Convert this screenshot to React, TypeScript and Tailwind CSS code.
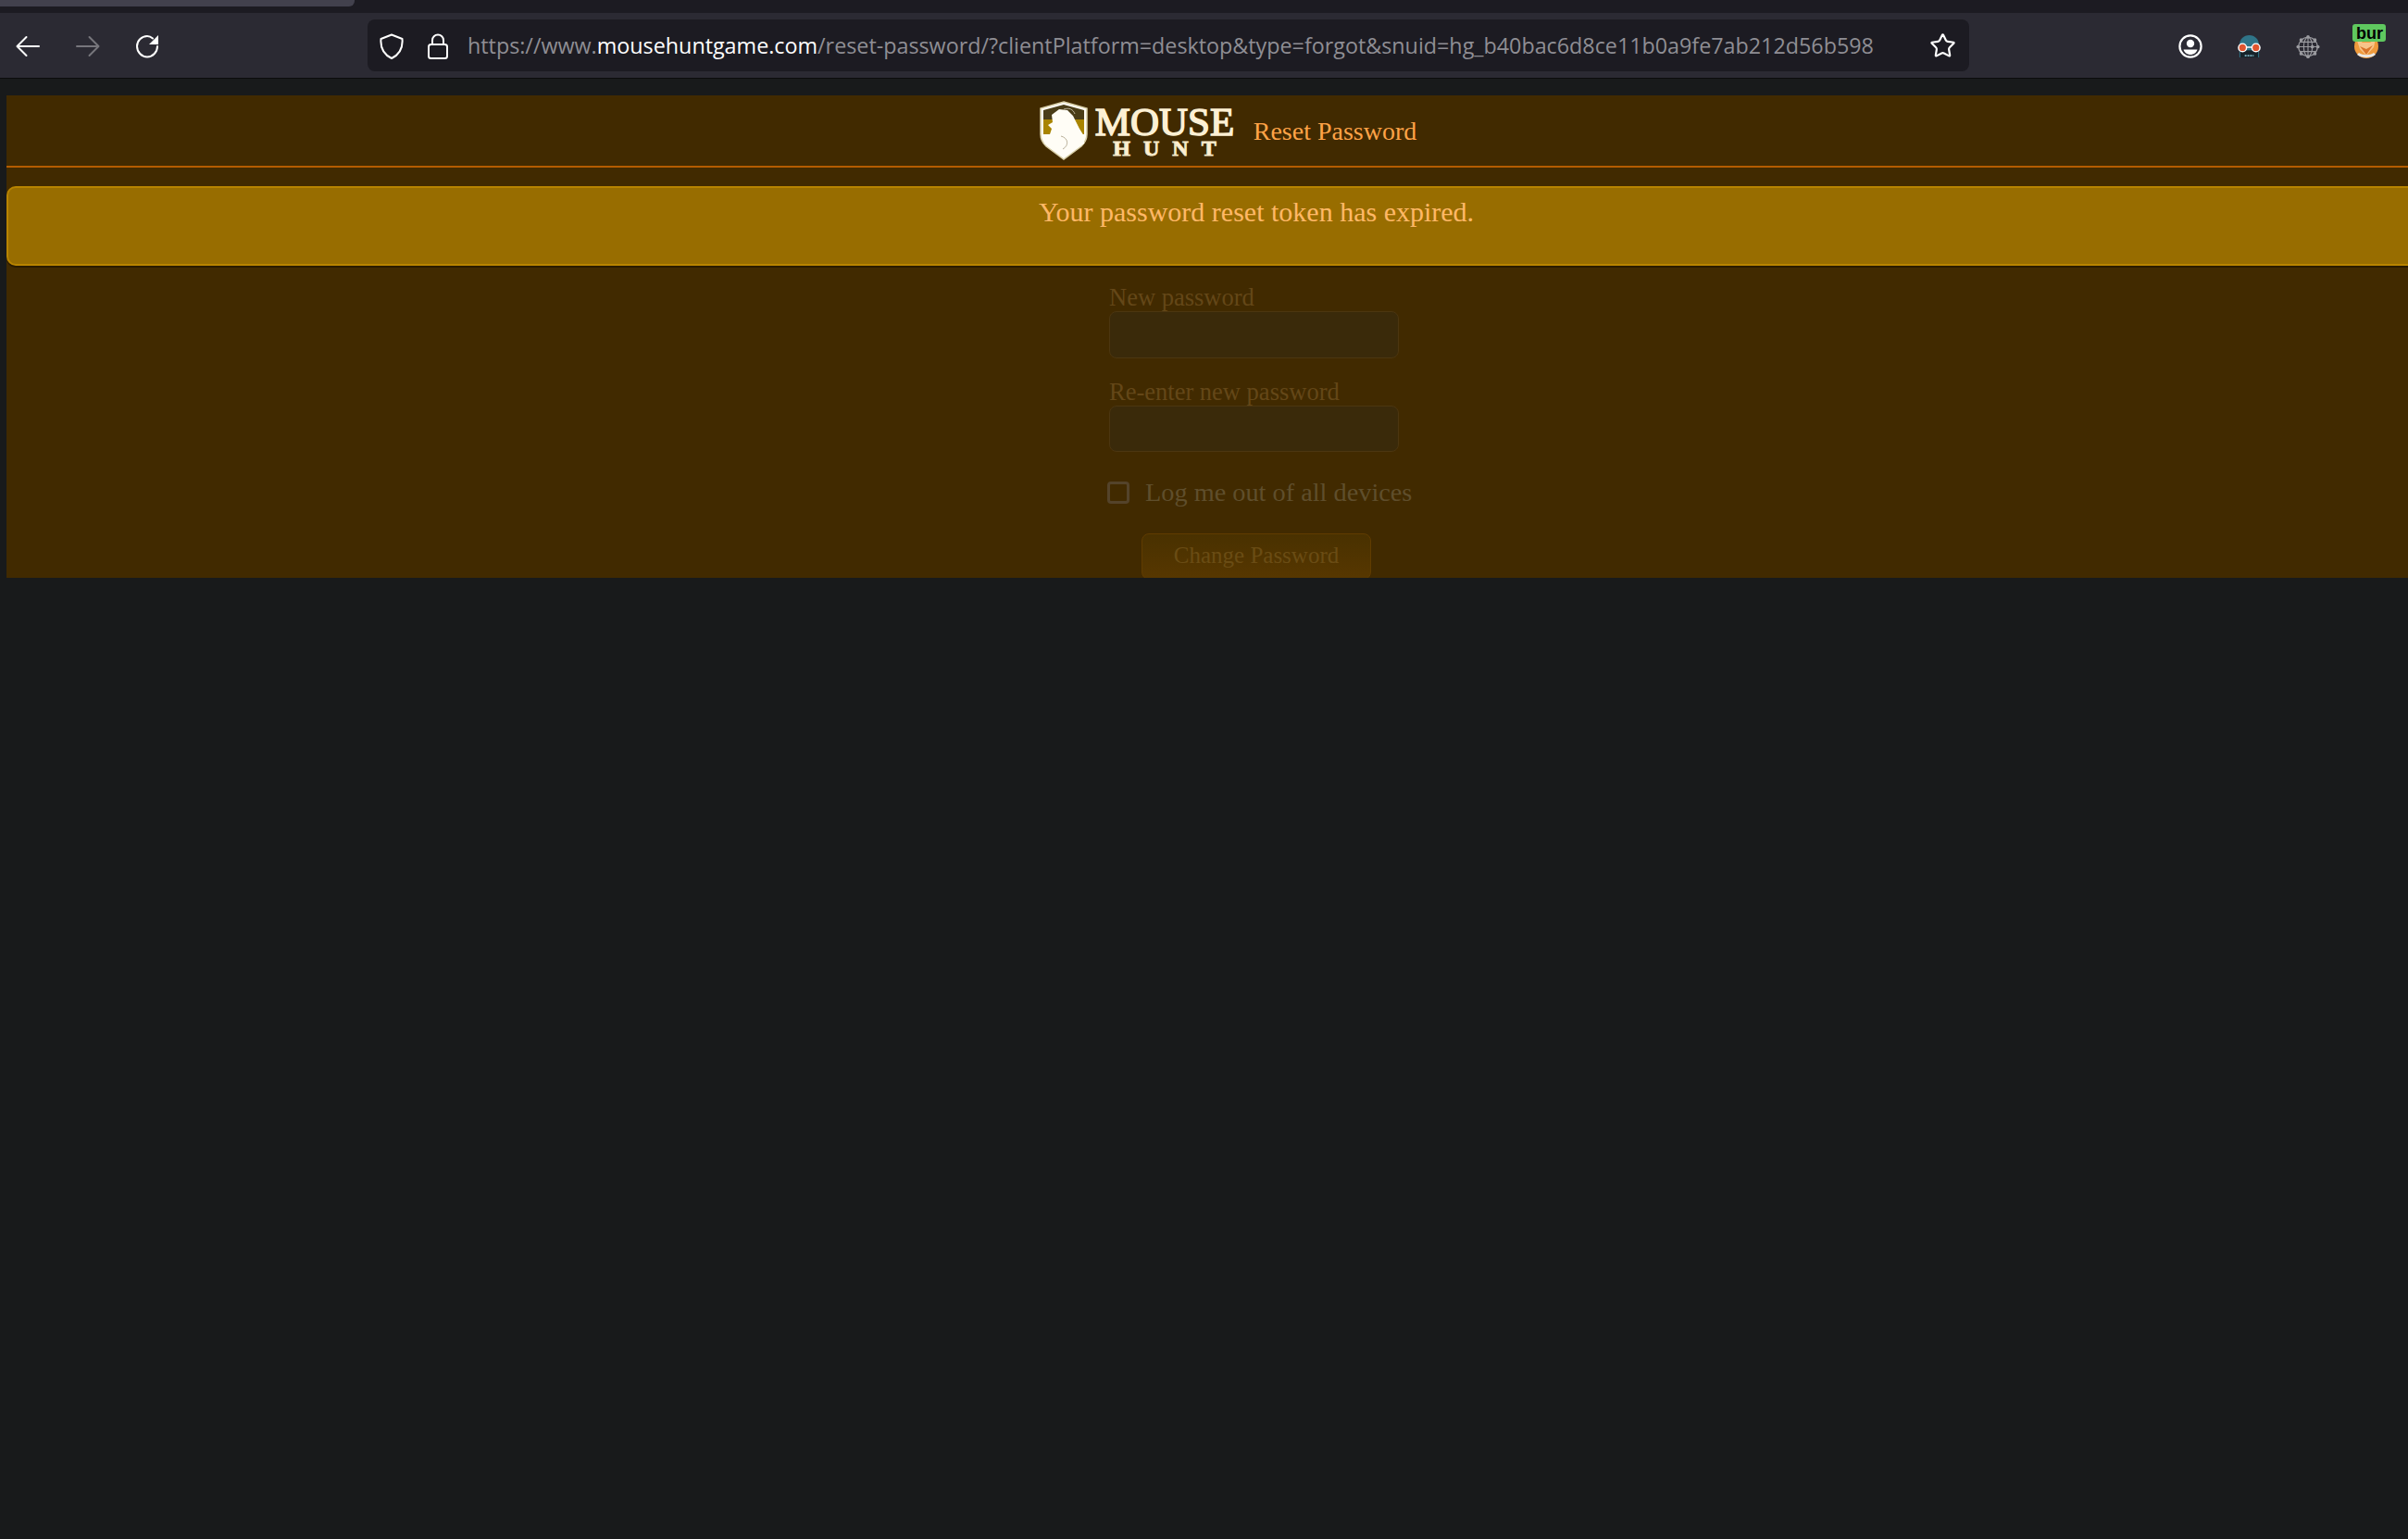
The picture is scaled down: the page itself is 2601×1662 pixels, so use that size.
import { Star } from 'lucide-react';

const BackIcon = ({ color }: { color: string }) => (
  <svg width="26" height="26" viewBox="0 0 26 26" fill="none" stroke={color} strokeWidth="2" strokeLinecap="round" strokeLinejoin="round">
    <path d="M2 13h23M11.500 3L1.500 13l10 10" />
  </svg>
);

const ForwardIcon = ({ color }: { color: string }) => (
  <svg width="26" height="26" viewBox="0 0 26 26" fill="none" stroke={color} strokeWidth="2" strokeLinecap="round" strokeLinejoin="round">
    <path d="M24 13H1M14.500 3l10 10-10 10" />
  </svg>
);

const ReloadIcon = () => (
  <svg width="26" height="26" viewBox="0 0 26 26" fill="none" className="ml-[-1px]">
    <path d="M19 4.500C17.300 3 15.300 2 13 2 6.900 2 2 6.900 2 13s4.900 11.500 11 11.500S24 19.100 24 13" stroke="white" strokeWidth="2" strokeLinecap="round" />
    <path d="M25 1v10H15z" fill="white" />
  </svg>
);

const ShieldIcon = () => (
  <svg width="26" height="28" viewBox="0 0 26 28" fill="none" stroke="white" strokeWidth="2" strokeLinejoin="round">
    <path d="M13 1.500L24.500 6c.8 9-2.500 16.500-11.500 21C4 22.500.7 15 1.500 6z" />
  </svg>
);

const LockIcon = () => (
  <svg width="22" height="28" viewBox="0 0 22 28" fill="none" stroke="white" strokeWidth="2">
    <rect x="1" y="12" width="20" height="15" rx="2.500" />
    <path d="M5 12V7.500a6 6 0 0 1 12 0V12" />
  </svg>
);

const AccountIcon = () => (
  <svg width="26" height="26" viewBox="0 0 26 26" fill="none">
    <circle cx="13" cy="13" r="11.600" stroke="white" strokeWidth="2.200" />
    <circle cx="13" cy="10" r="4.200" fill="white" />
    <path d="M5.500 16.500h15c-1 3.400-4 5.500-7.500 5.500s-6.500-2.100-7.500-5.500z" fill="white" />
  </svg>
);

const SpyIcon = () => (
  <svg width="27" height="27" viewBox="0 0 28 28" fill="none">
    <path d="M3 13C3 5 8 1 14 1s11 4 11 12v13H3z" fill="#2f7488" />
    <path d="M4 18h20v8H4z" fill="#16232a" />
    <circle cx="6.500" cy="15" r="4.500" fill="#e0552f" stroke="white" strokeWidth="1.500" />
    <circle cx="21.500" cy="15" r="4.500" fill="#e0552f" stroke="white" strokeWidth="1.500" />
    <path d="M11 14.500h6" stroke="white" strokeWidth="1.500" />
    <path d="M9 24h10" stroke="#7fb6c6" strokeWidth="2" strokeDasharray="2 1" />
  </svg>
);

const GlobeIcon = () => (
  <svg width="26" height="27" viewBox="0 0 28 28" fill="none" stroke="#9b9ba0" strokeWidth="1.200">
    <circle cx="14" cy="14" r="11" />
    <ellipse cx="14" cy="14" rx="5" ry="11" />
    <path d="M3 14h22M5 8.500h18M5 19.500h18M14 3v22" />
    <g fill="#9b9ba0" stroke="none">
      <circle cx="14" cy="2.500" r="2" />
      <circle cx="14" cy="25.500" r="2" />
      <circle cx="2.500" cy="14" r="2" />
      <circle cx="25.500" cy="14" r="2" />
      <circle cx="6" cy="6" r="2" />
      <circle cx="22" cy="6" r="2" />
      <circle cx="6" cy="22" r="2" />
      <circle cx="22" cy="22" r="2" />
      <circle cx="19" cy="14" r="2" />
    </g>
  </svg>
);

const FoxIcon = () => (
  <div className="relative w-[26px] h-[26px]">
    <svg width="26" height="26" viewBox="0 0 26 26">
      <circle cx="13" cy="13" r="13" fill="#ef9a3c" />
      <path d="M2 4l7 5 8 0 6-4-2 9-8 9-7-7z" fill="#f7c48a" />
      <path d="M6 13l7 3 7-4-7 10z" fill="#d9752a" />
      <path d="M3 22c4 4 16 4 20 0l-2-2c-4 3-12 3-16 0z" fill="#e8e8e8" />
    </svg>
    <div className="absolute left-[-2px] top-[-11px] w-[36px] h-[19px] bg-[#5fc85f] rounded-[3px] overflow-hidden text-black font-bold text-[18px] leading-[20px] pl-[4px] font-['Liberation_Sans',sans-serif]">
      bur
    </div>
  </div>
);

const MouseHuntLogo = () => (
  <div className="flex items-center gap-[7px] w-[212px] h-[64px]">
    <svg width="54" height="64" viewBox="0 0 54 64" className="shrink-0">
      {/* shield outline, dark top band, gold middle band */}
      <path d="M27 1l25 7v28c0 6-2 9-6 13L27 63 8 49c-4-4-6-7-6-13V8z" fill="#fffdf6" stroke="#d8cfa8" strokeWidth="1.500" />
      <path d="M5 10l22-6 22 6v10H5z" fill="#4a3d18" />
      <path d="M5 20h44v16H5z" fill="#a88400" />
      {/* mouse silhouette */}
      <path d="M14 15l8-6 9 1 6 6 7 14 5 8v8L27 61 6 46l6-10 2-6-4-4 5-3z" fill="#fffdf6" />
      <path d="M24 38c8 2 9 10 2 14M27 9c6-2 10 0 12 5" fill="none" stroke="#b9b09a" strokeWidth="1" />
    </svg>
    <div className="flex flex-col items-center font-['Liberation_Serif',serif] text-[#fdf0d4] mt-[1px]">
      <span className="text-[43px] leading-[36px] [-webkit-text-stroke:1.500px_#fdf0d4]">MOUSE</span>
      <span className="text-[24px] font-bold leading-[20px] tracking-[14px] mr-[-14px] [-webkit-text-stroke:1px_#f5e8c8]">HUNT</span>
    </div>
  </div>
);

const BrowserBar = () => (
  <div>
    <div className="h-[14px] bg-[#1c1b22]">
      <div className="w-[383px] h-[7px] bg-[#42414d] rounded-br-[6px]" />
    </div>
    <div className="h-[71px] bg-[#2b2a33] border-b border-[#0c0c0d] flex items-center font-['Open_Sans',sans-serif]">
      <div className="flex items-center gap-[39px] ml-[17px] w-[380px] mt-[1px]">
        <BackIcon color="white" />
        <ForwardIcon color="#77767c" />
        <ReloadIcon />
      </div>
      <div className="w-[1730px] h-[56px] bg-[#1c1b22] rounded-[8px] flex items-center mt-[-1px]">
        <div className="ml-[13px] shrink-0 mt-[2px]"><ShieldIcon /></div>
        <div className="ml-[26px] shrink-0 mt-[2px]"><LockIcon /></div>
        <div className="ml-[21px] pt-[2px] text-[23.300px] text-[#8f8e94] whitespace-nowrap w-[1560px] shrink-0">
          https://www.<span className="text-white">mousehuntgame.com</span>/reset-password/?clientPlatform=desktop&amp;type=forgot&amp;snuid=hg_b40bac6d8ce11b0a9fe7ab212d56b598
        </div>
        <Star size={29} color="white" strokeWidth={1.800} className="ml-[19px] shrink-0 mt-[1px]" />
      </div>
      <div className="flex items-center gap-[37px] ml-[226px] mt-[2px]">
        <AccountIcon />
        <SpyIcon />
        <GlobeIcon />
        <FoxIcon />
      </div>
    </div>
  </div>
);

const App = () => {
  return (
    <div className="w-[2601px] h-[1662px] overflow-hidden bg-[#181a1b] font-['Liberation_Serif',serif]">
      <BrowserBar />
      <div className="mt-[18px] ml-[7px] w-[2700px] h-[521px] overflow-hidden bg-[#412a00]">
        {/* Header */}
        <div className="h-[78px] border-b-2 border-[#b35c00] flex items-center justify-center gap-[20px] pr-[62px]">
          <MouseHuntLogo />
          <span className="text-[28px] text-[#ffa347] mt-[2px]">Reset Password</span>
        </div>

        {/* Alert */}
        <div className="mt-[20px] h-[86px] bg-[#986d00] border-2 border-r-0 border-[#b88400] rounded-l-[10px] shadow-[0_2px_0_#2a1b00] text-center text-[#ffb866] text-[30px] leading-[36px] pt-[8px] pr-[2px]">
          Your password reset token has expired.
        </div>

        {/* Form */}
        <div className="w-[318px] mx-auto mt-[17px] text-[26.500px] text-[#644718]">
          <label className="block leading-[32px] pt-[1px] h-[32px]">New password</label>
          <div className="w-[313px] h-[51px] bg-[#3a2a0a] border border-[#4c3610] rounded-[8px]" />
          <label className="block leading-[32px] mt-[20px] mb-[-1px]">Re-enter new password</label>
          <div className="w-[313px] h-[50px] bg-[#3a2a0a] border border-[#4c3610] rounded-[8px]" />
          <div className="flex items-center mt-[31px] ml-[-2px] h-[26px] whitespace-nowrap">
            <div className="w-[24px] h-[24px] shrink-0 bg-[#412a00] border-[3px] border-[#54432a] rounded-[4px]" />
            <span className="ml-[17px] text-[28.300px] text-[#5f4e2c]">Log me out of all devices</span>
          </div>
          <div className="flex justify-center mt-[31px]">
            <button className="w-[248px] h-[50px] pb-[2px] bg-gradient-to-b from-[#493100] to-[#573700] border border-[#603c00] rounded-[8px] text-[25px] text-[#6a4c14]">
              Change Password
            </button>
          </div>
        </div>
      </div>
    </div>
  );
};

export default App;
